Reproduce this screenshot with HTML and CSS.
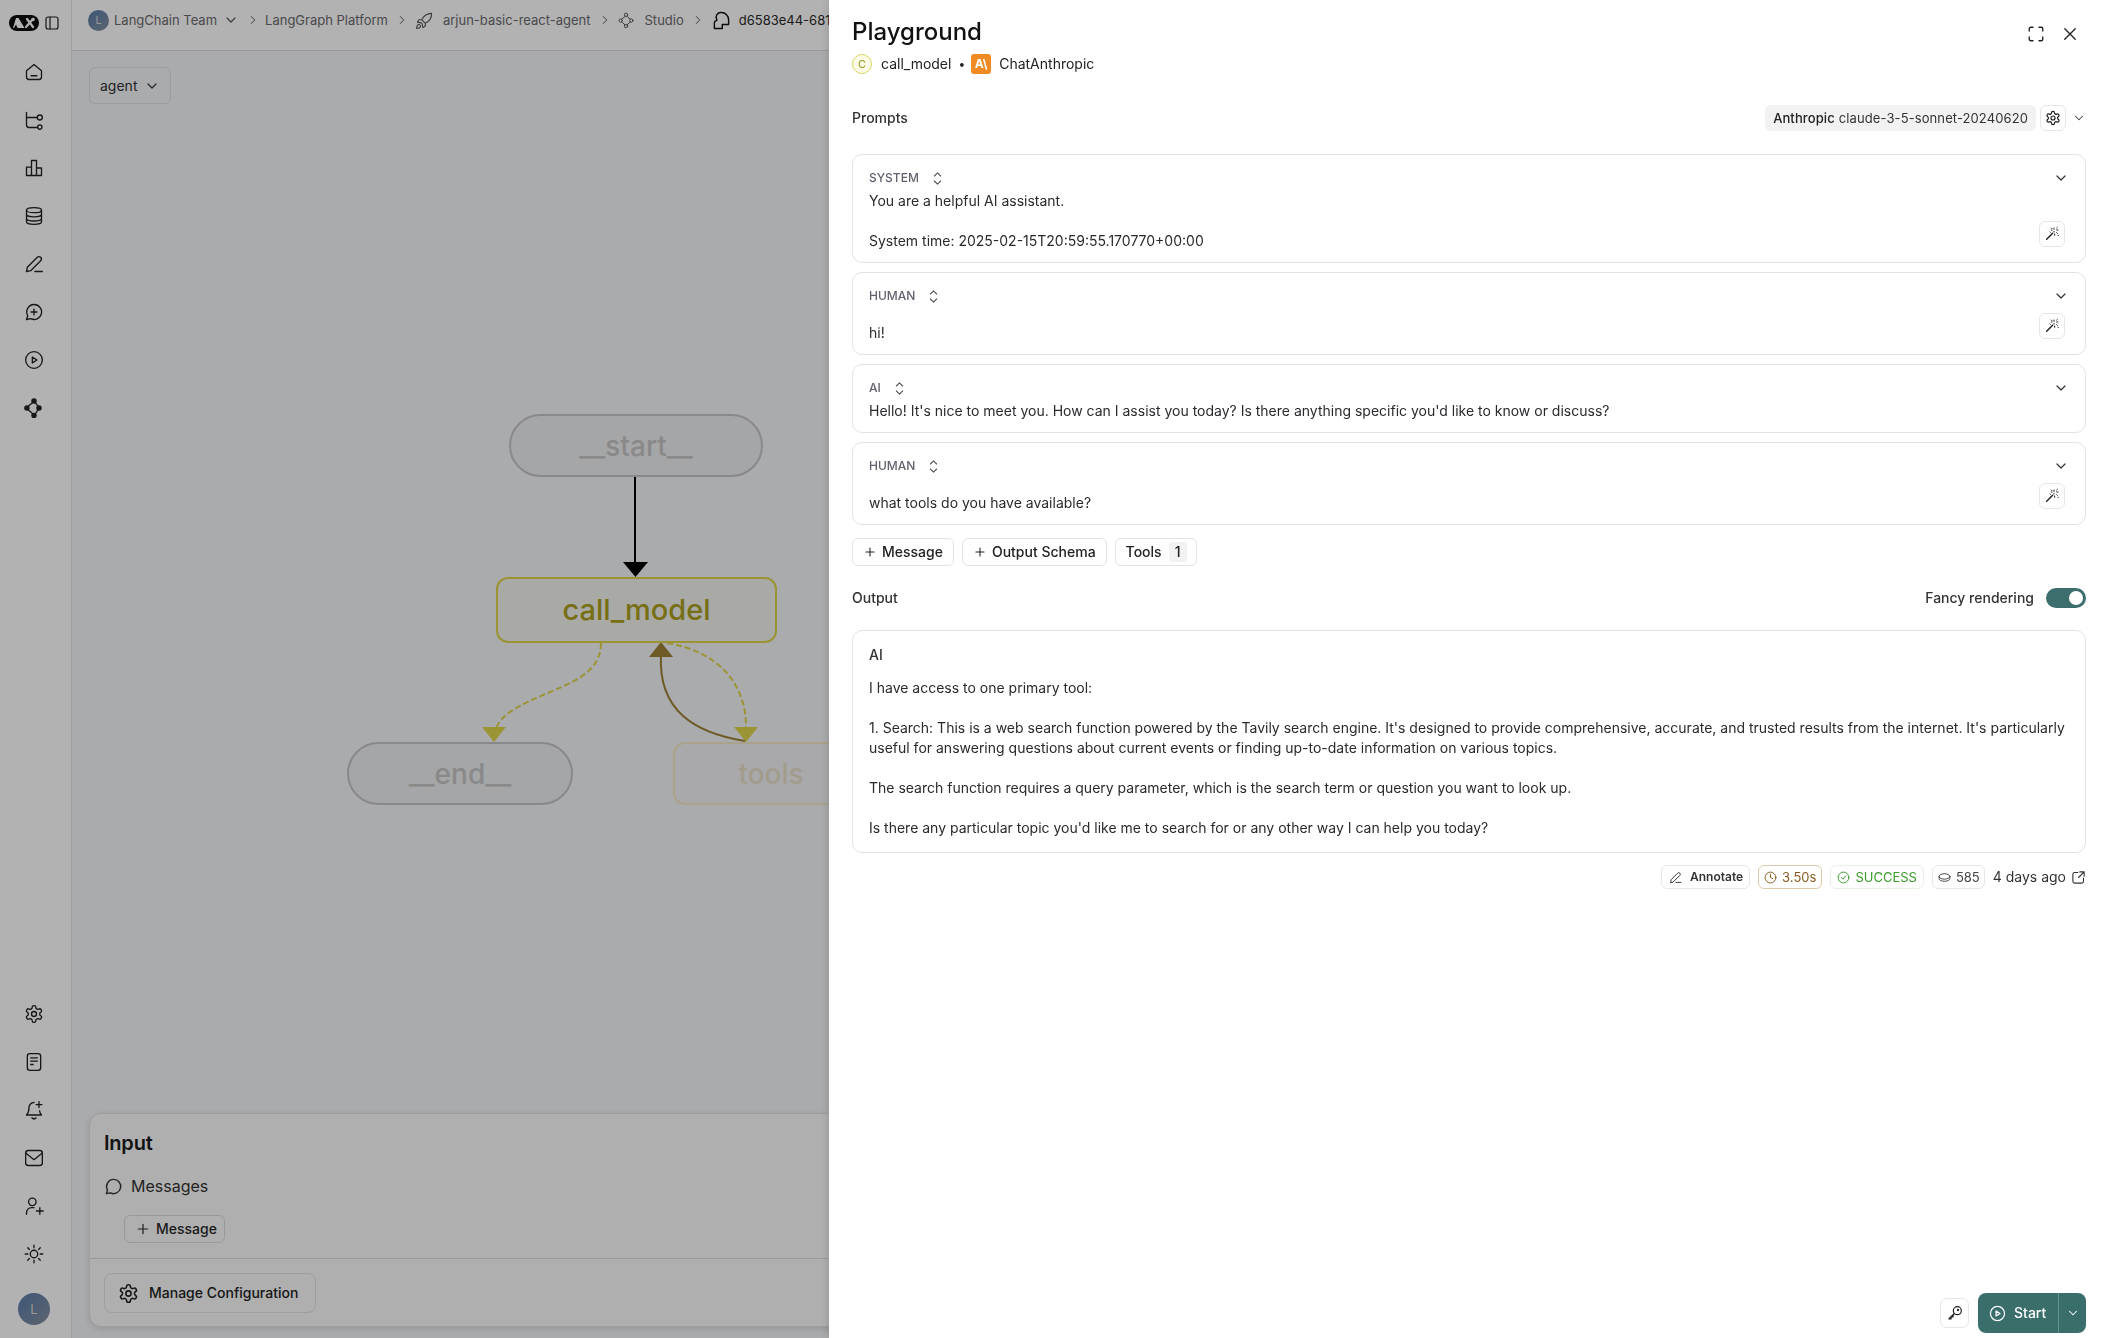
FILE: index.html
```html
<!DOCTYPE html>
<html lang="en">
<head>
  <meta charset="UTF-8">
  <meta name="viewport" content="width=device-width, initial-scale=1.0">
  <title>Playground</title>
  <link rel="stylesheet" href="styles.css">
</head>
<body>

  <!-- icon sprite -->
  <svg class="sprite" xmlns="http://www.w3.org/2000/svg">
    <symbol id="i-home" viewBox="0 0 24 24"><path d="M3 10.500 12 3l9 7.500V18a3 3 0 0 1-3 3H6a3 3 0 0 1-3-3z M8.500 16.500h7"/></symbol>
    <symbol id="i-tree" viewBox="0 0 24 24"><path d="M3 3v15a3 3 0 0 0 3 3h10 M3 9h13"/><circle cx="19" cy="9" r="3"/><circle cx="19" cy="20.500" r="2.600"/></symbol>
    <symbol id="i-chart" viewBox="0 0 24 24"><path d="M3 21V11h6 M9 21V3h6v18 M15 12h6v9 M3 21h18"/></symbol>
    <symbol id="i-db" viewBox="0 0 24 24"><ellipse cx="12" cy="5" rx="9" ry="3"/><path d="M3 5v14c0 1.700 4 3 9 3s9-1.300 9-3V5 M3 10c0 1.700 4 3 9 3s9-1.300 9-3 M3 15c0 1.700 4 3 9 3s9-1.300 9-3"/></symbol>
    <symbol id="i-pen" viewBox="0 0 24 24"><path d="M3 21l1-5L16 4a2.800 2.800 0 0 1 4 4L8 20z M13 21h9"/></symbol>
    <symbol id="i-chat-plus" viewBox="0 0 24 24"><path d="M12 3a9 9 0 1 1-4 17l-5 1 1.500-4.500A9 9 0 0 1 12 3z M12 8.500v7 M8.500 12h7"/></symbol>
    <symbol id="i-play" viewBox="0 0 24 24"><circle cx="12" cy="12" r="10"/><path d="M10 8.500v7l5.500-3.500z"/></symbol>
    <symbol id="i-flow" viewBox="0 0 24 24"><circle class="fill" cx="12" cy="3.500" r="2.500"/><circle class="fill" cx="3.500" cy="12" r="2.500"/><circle class="fill" cx="18" cy="12" r="2.500"/><circle class="fill" cx="12" cy="21" r="2.500"/><path d="M10.500 5.500 5 10 M13.500 5.500 17 10 M5 14l5.500 5 M17 14l-3.500 5"/></symbol>
    <symbol id="i-gear" viewBox="0 0 24 24"><path d="M12.220 2h-.44a2 2 0 0 0-2 2v.18a2 2 0 0 1-1 1.730l-.43.25a2 2 0 0 1-2 0l-.15-.08a2 2 0 0 0-2.730.73l-.22.38a2 2 0 0 0 .73 2.730l.15.1a2 2 0 0 1 1 1.720v.51a2 2 0 0 1-1 1.740l-.15.09a2 2 0 0 0-.73 2.730l.22.38a2 2 0 0 0 2.730.73l.15-.08a2 2 0 0 1 2 0l.43.25a2 2 0 0 1 1 1.730V20a2 2 0 0 0 2 2h.44a2 2 0 0 0 2-2v-.18a2 2 0 0 1 1-1.730l.43-.25a2 2 0 0 1 2 0l.15.08a2 2 0 0 0 2.730-.73l.22-.39a2 2 0 0 0-.73-2.730l-.15-.08a2 2 0 0 1-1-1.740v-.5a2 2 0 0 1 1-1.740l.15-.09a2 2 0 0 0 .73-2.730l-.22-.38a2 2 0 0 0-2.730-.73l-.15.08a2 2 0 0 1-2 0l-.43-.25a2 2 0 0 1-1-1.730V4a2 2 0 0 0-2-2z"/><circle cx="12" cy="12" r="3"/></symbol>
    <symbol id="i-doc" viewBox="0 0 24 24"><rect x="4" y="2" width="16" height="20" rx="3"/><path d="M8 7h8 M8 11h8 M8 15h3"/></symbol>
    <symbol id="i-bell" viewBox="0 0 24 24"><path d="M12 3a6 6 0 0 0-6 6c0 5-2 8-3 9h18c-.8-.8-1.800-2.500-2.400-5 M9.500 21.500 12 23l2.500-1.500 M18 2v7 M14.500 5.500h7"/></symbol>
    <symbol id="i-mail" viewBox="0 0 24 24"><rect x="2" y="3" width="20" height="18" rx="3"/><path d="M2 6l10 8 10-8"/></symbol>
    <symbol id="i-user-plus" viewBox="0 0 24 24"><circle cx="10" cy="7" r="4.500"/><path d="M3 22v-2a6 6 0 0 1 6-6h3 M19 14v8 M15 18h8"/></symbol>
    <symbol id="i-sun" viewBox="0 0 24 24"><circle cx="12" cy="12" r="4.500"/><path d="M12 1.500v3 M12 19.500v3 M1.500 12h3 M19.500 12h3 M4.500 4.500l2 2 M17.500 17.500l2 2 M4.500 19.500l2-2 M17.500 6.500l2-2"/></symbol>
    <symbol id="i-chev" viewBox="0 0 24 24"><path d="M6 9l6 6 6-6"/></symbol>
    <symbol id="i-right" viewBox="0 0 24 24"><path d="M9 6l6 6-6 6"/></symbol>
    <symbol id="i-sort" viewBox="0 0 24 24"><path d="M7 8l5-5 5 5 M7 16l5 5 5-5"/></symbol>
    <symbol id="i-rocket" viewBox="0 0 24 24"><path d="M21 3c-6 0-10 3-12.500 8L13 15.500c5-2.500 8-6.500 8-12.500z M8.500 11H5l-2 3 5 1 M13 15.500V19l-3 2-1-5 M4 17c-1.500 1-2 4-2 5 1 0 4-.5 5-2 .5-1-.5-2-1-2.500-.5-.5-1.200-1-2-.5z"/></symbol>
    <symbol id="i-graph" viewBox="0 0 24 24"><circle cx="12" cy="3.500" r="2.500"/><circle cx="4" cy="12" r="2.500"/><circle cx="20" cy="12" r="2.500"/><circle cx="12" cy="20.500" r="2.500"/><path d="M10.500 6 5.500 10 M13.500 6l5 4 M5.500 14l5 4.500 M18.500 14l-5 4.500"/></symbol>
    <symbol id="i-thread" viewBox="0 0 24 24"><path d="M12 2a9 9 0 0 1 9 9v6h-8v5H3v-7c0-2 2-3 3-3V11a6 6 0 0 1 6-9z"/></symbol>
    <symbol id="i-bubble" viewBox="0 0 24 24"><path d="M12 3a9 9 0 1 1-4 17l-5 1 1.500-4.500A9 9 0 0 1 12 3z"/></symbol>
    <symbol id="i-plus" viewBox="0 0 24 24"><path d="M12 5v14 M5 12h14"/></symbol>
    <symbol id="i-wand" viewBox="0 0 24 24"><path class="wand-handle" d="M4 20 13 11"/><path d="M15 3v2 M15 8v1 M11 6h1 M19 6h2 M19 10l1 1 M11 3l1 1 M20 2l-1 1 M16 12v2 M21 14h.5 M9 9l.5.5"/></symbol>
    <symbol id="i-expand" viewBox="0 0 24 24"><path d="M3 8V5a2 2 0 0 1 2-2h3 M16 3h3a2 2 0 0 1 2 2v3 M21 16v3a2 2 0 0 1-2 2h-3 M8 21H5a2 2 0 0 1-2-2v-3"/></symbol>
    <symbol id="i-close" viewBox="0 0 24 24"><path d="M5 5l14 14 M19 5 5 19"/></symbol>
    <symbol id="i-clock" viewBox="0 0 24 24"><circle cx="12" cy="12" r="10"/><path d="M12 6v6l4 2"/></symbol>
    <symbol id="i-check" viewBox="0 0 24 24"><circle cx="12" cy="12" r="10"/><path d="M8 12l3 3 5-6"/></symbol>
    <symbol id="i-coin" viewBox="0 0 24 24"><ellipse cx="12" cy="10" rx="10" ry="5"/><path d="M2 10v4c0 2.800 4.500 5 10 5s10-2.200 10-5v-4"/></symbol>
    <symbol id="i-external" viewBox="0 0 24 24"><path d="M11 4H6a3 3 0 0 0-3 3v11a3 3 0 0 0 3 3h11a3 3 0 0 0 3-3v-5 M14 3h7v7 M21 3l-9 9"/></symbol>
    <symbol id="i-key" viewBox="0 0 24 24"><circle cx="15.500" cy="8.500" r="6"/><circle cx="16.500" cy="7.500" r=".8"/><path d="M11 12.500 3 20.500v.5h3v-3h3v-3h1"/></symbol>
  </svg>

  <div class="app">
    <nav class="sidebar">
      <div class="logo-row">
        <div class="logo">
          <svg viewBox="0 0 30 16"><path class="logo-fill" d="M7 3h2.500l6 10H8.500L7 9.500 5 13H4z"/><path class="logo-mark" d="M18 4l6 8 M24 4l-7 8"/><circle class="logo-fill" cx="24" cy="4.500" r="1.800"/></svg>
        </div>
        <svg class="icon toggle-icon" viewBox="0 0 24 24"><rect x="3" y="3" width="18" height="18" rx="3"/><path d="M9 3v18"/></svg>
      </div>
      <div class="nav-group">
        <svg class="icon nav-icon"><use href="#i-home"/></svg>
        <svg class="icon nav-icon"><use href="#i-tree"/></svg>
        <svg class="icon nav-icon"><use href="#i-chart"/></svg>
        <svg class="icon nav-icon"><use href="#i-db"/></svg>
        <svg class="icon nav-icon"><use href="#i-pen"/></svg>
        <svg class="icon nav-icon"><use href="#i-chat-plus"/></svg>
        <svg class="icon nav-icon"><use href="#i-play"/></svg>
        <svg class="icon nav-icon"><use href="#i-flow"/></svg>
      </div>
      <div class="nav-group nav-bottom">
        <svg class="icon nav-icon"><use href="#i-gear"/></svg>
        <svg class="icon nav-icon"><use href="#i-doc"/></svg>
        <svg class="icon nav-icon"><use href="#i-bell"/></svg>
        <svg class="icon nav-icon"><use href="#i-mail"/></svg>
        <svg class="icon nav-icon"><use href="#i-user-plus"/></svg>
        <svg class="icon nav-icon"><use href="#i-sun"/></svg>
        <div class="avatar avatar-large">L</div>
      </div>
    </nav>

    <div class="main">
      <header class="topbar">
        <div class="avatar">L</div>
        <span class="crumb">LangChain Team</span>
        <svg class="icon crumb-chev"><use href="#i-chev"/></svg>
        <svg class="icon crumb-sep"><use href="#i-right"/></svg>
        <span class="crumb">LangGraph Platform</span>
        <svg class="icon crumb-sep"><use href="#i-right"/></svg>
        <svg class="icon crumb-icon"><use href="#i-rocket"/></svg>
        <span class="crumb">arjun-basic-react-agent</span>
        <svg class="icon crumb-sep"><use href="#i-right"/></svg>
        <svg class="icon crumb-icon crumb-icon-graph"><use href="#i-graph"/></svg>
        <span class="crumb">Studio</span>
        <svg class="icon crumb-sep"><use href="#i-right"/></svg>
        <svg class="icon crumb-icon crumb-icon-dark"><use href="#i-thread"/></svg>
        <span class="crumb crumb-current">d6583e44-681</span>
      </header>

      <div class="canvas">
        <button class="agent-select">agent <svg class="icon"><use href="#i-chev"/></svg></button>

        <svg class="edges" width="830" height="900" viewBox="0 51 830 900">
          <path class="edge-black" d="M635 477V564"/>
          <path class="head-black" d="M623 562h25l-12.500 15z"/>
          <path class="edge-dash" d="M601 643c0 30-30 40-58 52-25 11-42 19-47 34"/>
          <path class="head-olive" d="M482 727h24l-12 15z"/>
          <path class="edge-dash" d="M667 643c50 8 80 40 79 86"/>
          <path class="head-olive" d="M734 727h24l-12 15z"/>
          <path class="edge-brown" d="M745 741c-50-8-87-30-84-86"/>
          <path class="head-brown" d="M649 657h24l-12-15z"/>
        </svg>

        <div class="node node-start">__start__</div>
        <div class="node node-call">call_model</div>
        <div class="node node-end">__end__</div>
        <div class="node node-tools">tools</div>

        <section class="input-panel">
          <div class="input-body">
            <h3 class="input-title">Input</h3>
            <div class="messages-row"><svg class="icon"><use href="#i-bubble"/></svg>Messages</div>
            <button class="btn btn-input-msg"><svg class="icon"><use href="#i-plus"/></svg>Message</button>
          </div>
          <div class="input-foot">
            <button class="btn btn-config"><svg class="icon"><use href="#i-gear"/></svg>Manage Configuration</button>
          </div>
        </section>
      </div>
    </div>
  </div>

  <div class="overlay"></div>

  <aside class="panel">
    <div class="panel-head">
      <div>
        <h1 class="panel-title">Playground</h1>
        <div class="panel-sub">
          <span class="node-badge">C</span>
          <span class="sub-node">call_model</span>
          <span class="sub-dot">•</span>
          <span class="anthropic-badge">A\</span>
          <span>ChatAnthropic</span>
        </div>
      </div>
      <div class="panel-actions">
        <svg class="icon"><use href="#i-expand"/></svg>
        <svg class="icon icon-close"><use href="#i-close"/></svg>
      </div>
    </div>

    <div class="section-row prompts-row">
      <span class="section-label">Prompts</span>
      <div class="model-tools">
        <span class="model-pill"><b>Anthropic</b> claude-3-5-sonnet-20240620</span>
        <button class="square-btn"><svg class="icon"><use href="#i-gear"/></svg></button>
        <svg class="icon model-chev"><use href="#i-chev"/></svg>
      </div>
    </div>

    <div class="message-list">
      <div class="message-card">
        <div class="card-head"><span class="role">SYSTEM</span><svg class="icon sort-icon"><use href="#i-sort"/></svg><svg class="icon card-chev"><use href="#i-chev"/></svg></div>
        <div class="card-body">
          <div class="card-text">You are a helpful AI assistant.<br><br>System time: 2025-02-15T20:59:55.170770+00:00</div>
          <button class="square-btn wand-btn"><svg class="icon"><use href="#i-wand"/></svg></button>
        </div>
      </div>
      <div class="message-card">
        <div class="card-head card-head-tall"><span class="role">HUMAN</span><svg class="icon sort-icon"><use href="#i-sort"/></svg><svg class="icon card-chev"><use href="#i-chev"/></svg></div>
        <div class="card-body">
          <div class="card-text">hi!</div>
          <button class="square-btn wand-btn"><svg class="icon"><use href="#i-wand"/></svg></button>
        </div>
      </div>
      <div class="message-card">
        <div class="card-head"><span class="role">AI</span><svg class="icon sort-icon"><use href="#i-sort"/></svg><svg class="icon card-chev"><use href="#i-chev"/></svg></div>
        <div class="card-body">
          <div class="card-text">Hello! It's nice to meet you. How can I assist you today? Is there anything specific you'd like to know or discuss?</div>
        </div>
      </div>
      <div class="message-card">
        <div class="card-head card-head-tall"><span class="role">HUMAN</span><svg class="icon sort-icon"><use href="#i-sort"/></svg><svg class="icon card-chev"><use href="#i-chev"/></svg></div>
        <div class="card-body">
          <div class="card-text">what tools do you have available?</div>
          <button class="square-btn wand-btn"><svg class="icon"><use href="#i-wand"/></svg></button>
        </div>
      </div>
    </div>

    <div class="add-row">
      <button class="btn btn-add"><svg class="icon"><use href="#i-plus"/></svg>Message</button>
      <button class="btn btn-add"><svg class="icon"><use href="#i-plus"/></svg>Output Schema</button>
      <button class="btn btn-add btn-tools">Tools <span class="count">1</span></button>
    </div>

    <div class="section-row output-row">
      <span class="section-label">Output</span>
      <div class="fancy">Fancy rendering <span class="switch"></span></div>
    </div>

    <div class="output-card">
      <div class="output-role">AI</div>
      <p>I have access to one primary tool:</p>
      <p>1. Search: This is a web search function powered by the Tavily search engine. It's designed to provide comprehensive, accurate, and trusted results from the internet. It's particularly useful for answering questions about current events or finding up-to-date information on various topics.</p>
      <p>The search function requires a query parameter, which is the search term or question you want to look up.</p>
      <p>Is there any particular topic you'd like me to search for or any other way I can help you today?</p>
    </div>

    <div class="meta-row">
      <span class="tag tag-annotate"><svg class="icon"><use href="#i-pen"/></svg>Annotate</span>
      <span class="tag tag-time"><svg class="icon"><use href="#i-clock"/></svg>3.50s</span>
      <span class="tag tag-success"><svg class="icon"><use href="#i-check"/></svg>SUCCESS</span>
      <span class="tag tag-tokens"><svg class="icon"><use href="#i-coin"/></svg>585</span>
      <span class="time-ago">4 days ago <svg class="icon"><use href="#i-external"/></svg></span>
    </div>

    <div class="panel-foot">
      <button class="square-btn key-btn"><svg class="icon"><use href="#i-key"/></svg></button>
      <div class="start-btn">
        <span class="start-main"><svg class="icon"><use href="#i-play"/></svg>Start</span>
        <span class="start-more"><svg class="icon"><use href="#i-chev"/></svg></span>
      </div>
    </div>
  </aside>

</body>
</html>
```

FILE: styles.css
```css
* {
  box-sizing: border-box;
}

html, body {
  height: 100%;
}

body {
  margin: 0;
  overflow: hidden;
  font-family: Inter, 'Noto Sans', sans-serif;
  font-size: 14px;
  line-height: 20px;
  color: #1f1f23;
  background-color: #fff;
}

button {
  font: inherit;
  color: inherit;
  background: none;
  padding: 0;
}

.sprite {
  display: none;
}

.icon {
  width: 16px;
  height: 16px;
  flex: none;
  fill: none;
  stroke: currentColor;
  stroke-width: 1.8;
  stroke-linecap: round;
  stroke-linejoin: round;
}

.fill {
  fill: currentColor;
}

.app {
  display: flex;
  height: 100%;
}

/* Left rail */
.sidebar {
  width: 72px;
  flex: none;
  display: flex;
  flex-direction: column;
  align-items: center;
  background-color: #fff;
  border-right: 1px solid #e3e3e5;
  color: #222;
  padding: 0 3px 13px 0;
}

.logo-row {
  height: 51px;
  width: 100%;
  display: flex;
  align-items: center;
  padding: 0 0 5px 9px;
  gap: 5px;
}

.logo {
  width: 30px;
  height: 16px;
  border-radius: 8px;
  background-color: #0c0c0c;
  display: flex;
}

.logo-fill {
  fill: #fff;
}

.logo-mark {
  fill: none;
  stroke: #fff;
  stroke-width: 2.2;
  stroke-linecap: round;
}

.toggle-icon {
  width: 16px;
  height: 16px;
}

.nav-group {
  display: flex;
  flex-direction: column;
  align-items: center;
  gap: 28px;
  margin-top: 11px;
}

.nav-icon {
  width: 20px;
  height: 20px;
  stroke-width: 1.6;
}

.nav-bottom {
  margin-top: auto;
}

.avatar {
  width: 21px;
  height: 21px;
  flex: none;
  border-radius: 50%;
  display: flex;
  align-items: center;
  justify-content: center;
  font-size: 11px;
  color: #d8d8d8;
  background: linear-gradient(135deg, #5a7dab, #8490a0);
}

.avatar-large {
  width: 32px;
  height: 32px;
  font-size: 13px;
  margin-top: 1px;
}

.main {
  flex: 1;
  min-width: 0;
  display: flex;
  flex-direction: column;
}

/* Breadcrumbs */
.topbar {
  height: 51px;
  flex: none;
  display: flex;
  align-items: center;
  padding: 0 0 10px 16px;
  font-size: 13px;
  white-space: nowrap;
  overflow: hidden;
  border-bottom: 1px solid #dcdcde;
  background-color: #fff;
}

.crumb {
  color: #6b6b6e;
  margin-left: 5px;
}

.crumb-current {
  color: #2a2a2a;
}

.crumb-chev {
  margin-left: 6px;
  color: #555;
}

.crumb-sep {
  width: 14px;
  height: 14px;
  margin-left: 7px;
  color: #777;
}

.crumb-icon {
  width: 19px;
  height: 19px;
  margin: 0 4px 0 6px;
  color: #555;
  stroke-width: 1.4;
}

.crumb-icon-graph {
  width: 16px;
  margin: 0 6px 0 6px;
}

.crumb-icon-dark {
  margin: 0 3px 0 7px;
  color: #111;
  stroke-width: 1.8;
}

/* Graph canvas */
.canvas {
  flex: 1;
  position: relative;
  background-color: #f4f5f8;
}

.agent-select {
  position: absolute;
  left: 17px;
  top: 16px;
  width: 82px;
  height: 37px;
  display: flex;
  align-items: center;
  gap: 7px;
  padding-left: 10px;
  border: 1px solid #dedee2;
  border-radius: 6px;
  color: #333;
  background-color: #f4f5f8;
}

.edges {
  position: absolute;
  left: -72px;
  top: 0;
  fill: none;
}

.edge-black {
  stroke: #000;
  stroke-width: 2;
}

.head-black {
  fill: #000;
}

.edge-dash {
  stroke: #ddd54c;
  stroke-width: 2;
  stroke-dasharray: 6 3;
}

.head-olive {
  fill: #ddd54c;
}

.edge-brown {
  stroke: #9d8136;
  stroke-width: 2;
}

.head-brown {
  fill: #9d8136;
}

.node {
  position: absolute;
  display: flex;
  align-items: center;
  justify-content: center;
  font-size: 28px;
  font-weight: 500;
  height: 63px;
  background-color: #edeef0;
  border: 2px solid #c5c5c8;
  color: #c4c4c5;
  border-radius: 32px;
}

.node-start {
  left: 437px;
  top: 363px;
  width: 254px;
}

.node-end {
  left: 275px;
  top: 691px;
  width: 226px;
}

.node-call {
  left: 424px;
  top: 526px;
  width: 281px;
  height: 66px;
  border-radius: 12px;
  font-size: 29px;
  background-color: #f2f2ec;
  border-color: #ddd54c;
  color: #aaa01e;
}

.node-tools {
  left: 601px;
  top: 691px;
  width: 196px;
  border-radius: 12px;
  background-color: #f2f3f5;
  border-color: #f5e8c8;
  color: #e8e0cb;
}

/* Input box at the bottom of the canvas */
.input-panel {
  position: absolute;
  left: 17px;
  bottom: 11px;
  width: 1100px;
  height: 214px;
  display: flex;
  flex-direction: column;
  background-color: #fbfbfb;
  border: 1px solid #e3e3e5;
  border-radius: 12px;
  box-shadow: 0 2px 6px rgba(0, 0, 0, 0.12);
}

.input-body {
  flex: 1;
  padding: 15px 14px 0;
}

.input-title {
  margin: 0;
  font-size: 20px;
  line-height: 28px;
  font-weight: 600;
  letter-spacing: -0.2px;
  color: #1a1a1a;
}

.messages-row {
  display: flex;
  align-items: center;
  gap: 8px;
  margin-top: 17px;
  font-size: 16px;
  line-height: 24px;
  color: #333;
}

.messages-row .icon {
  width: 19px;
  height: 19px;
}

.btn {
  display: inline-flex;
  align-items: center;
  height: 28px;
  gap: 5px;
  border: 1px solid #e3e3e5;
  border-radius: 6px;
  font-size: 14px;
  white-space: nowrap;
}

.btn-input-msg {
  width: 101px;
  margin: 17px 0 0 20px;
  padding-left: 10px;
  font-size: 14px;
  font-weight: 500;
  color: #2a2a2a;
  border-color: #dcdcde;
}

.input-foot {
  height: 68px;
  flex: none;
  padding: 14px 14px 0;
  border-top: 1px solid #dcdcde;
}

.btn-config {
  width: 212px;
  height: 40px;
  padding-left: 13px;
  gap: 10px;
  border-radius: 8px;
  font-weight: 500;
  color: #222;
}

.btn-config .icon {
  width: 21px;
  height: 21px;
}

/* Dim layer under the drawer */
.overlay {
  position: fixed;
  inset: 0;
  background-color: rgba(0, 0, 0, 0.3);
}

/* Playground drawer */
.panel {
  position: fixed;
  top: 0;
  right: 0;
  bottom: 0;
  width: 1279px;
  display: flex;
  flex-direction: column;
  padding: 16px 22px 5px 23px;
  background-color: #fff;
  box-shadow: -2px 0 8px rgba(0, 0, 0, 0.12);
}

.panel-head {
  display: flex;
  justify-content: space-between;
  align-items: flex-start;
}

.panel-title {
  margin: 0;
  font-size: 24px;
  line-height: 32px;
  font-weight: 500;
  color: #111;
}

.panel-sub {
  display: flex;
  align-items: center;
  height: 24px;
  margin-top: 4px;
  color: #222;
}

.node-badge {
  width: 20px;
  height: 20px;
  border-radius: 50%;
  display: flex;
  align-items: center;
  justify-content: center;
  font-size: 11px;
  color: #9a9420;
  background-color: #fcfce8;
  border: 1px solid #d9d660;
}

.sub-node {
  margin-left: 9px;
}

.sub-dot {
  margin: 0 6px 0 7px;
  font-size: 12px;
}

.anthropic-badge {
  width: 20px;
  height: 20px;
  border-radius: 3px;
  margin-right: 8px;
  display: flex;
  align-items: center;
  justify-content: center;
  font-size: 12px;
  font-weight: 700;
  color: #fff;
  background-color: #f08a24;
}

.panel-actions {
  display: flex;
  align-items: center;
  gap: 16px;
  margin: 9px 7px 0 0;
  color: #222;
}

.panel-actions .icon {
  width: 18px;
  height: 18px;
}

.section-row {
  display: flex;
  align-items: center;
  justify-content: space-between;
}

.prompts-row {
  margin-top: 29px;
  height: 26px;
}

.section-label {
  font-weight: 500;
  color: #333;
}

.model-tools {
  display: flex;
  align-items: center;
  gap: 4px;
}

.model-pill {
  height: 26px;
  padding: 0 8px;
  display: flex;
  align-items: center;
  gap: 4px;
  border-radius: 6px;
  font-size: 13px;
  letter-spacing: 0.1px;
  color: #333;
  background-color: #f2f2f3;
  white-space: nowrap;
}

.model-pill b {
  font-weight: 500;
  color: #222;
}

.square-btn {
  width: 26px;
  height: 26px;
  display: flex;
  align-items: center;
  justify-content: center;
  border: 1px solid #e6e6e9;
  border-radius: 6px;
}

.model-chev {
  margin-left: 2px;
  width: 14px;
  height: 14px;
  color: #444;
}

.message-list {
  display: flex;
  flex-direction: column;
  gap: 9px;
  margin-top: 23px;
}

.message-card {
  border: 1px solid #e3e3e6;
  border-radius: 10px;
  padding: 13px 16px 11px 16px;
}

.card-head {
  display: flex;
  align-items: center;
  height: 20px;
  margin-bottom: 3px;
}

.card-head-tall {
  margin-bottom: 7px;
}

.role {
  font-size: 12px;
  font-weight: 500;
  color: #62626e;
}

.sort-icon {
  margin-left: 11px;
  width: 15px;
  height: 15px;
  color: #555;
}

.card-chev {
  margin-left: auto;
  margin-right: 0;
  width: 16px;
  height: 16px;
  color: #333;
}

.card-body {
  display: flex;
  align-items: flex-end;
  justify-content: space-between;
}

.card-text {
  color: #2a2a2e;
}

.wand-btn {
  margin: 0 4px 4px 0;
}

.wand-btn .icon {
  stroke-width: 1.5;
  color: #222;
}

.wand-handle {
  stroke-width: 2.2;
}

.add-row {
  display: flex;
  gap: 8px;
  margin-top: 13px;
}

.btn-add {
  padding: 0 10px;
  font-weight: 500;
  color: #222;
}

.btn-add .icon {
  width: 14px;
  height: 14px;
}

.btn-tools {
  gap: 7px;
  padding-right: 9px;
}

.count {
  width: 18px;
  height: 20px;
  border-radius: 3px;
  text-align: center;
  background-color: #f2f2f3;
}

.output-row {
  height: 20px;
  margin-top: 22px;
}

.fancy {
  display: flex;
  align-items: center;
  gap: 12px;
  font-weight: 500;
  color: #333;
}

.switch {
  position: relative;
  width: 40px;
  height: 20px;
  border-radius: 10px;
  background-color: #3b6e6c;
}

.switch::after {
  content: "";
  position: absolute;
  right: 3px;
  top: 3px;
  width: 14px;
  height: 14px;
  border-radius: 50%;
  background-color: #fff;
}

.output-card {
  margin-top: 22px;
  height: 223px;
  border: 1px solid #e3e3e6;
  border-radius: 10px;
  padding: 14px 16px;
  color: #2a2a2e;
}

.output-role {
  font-weight: 500;
  color: #333;
}

.output-card p {
  margin: 0 0 20px;
}

.output-role + p {
  margin-top: 13px;
}

.meta-row {
  display: flex;
  justify-content: flex-end;
  align-items: center;
  gap: 8px;
  margin-top: 12px;
  font-size: 13px;
}

.tag {
  height: 24px;
  display: flex;
  align-items: center;
  gap: 5px;
  padding: 0 5px;
  border: 1px solid #e6e6e9;
  border-radius: 6px;
}

.tag .icon {
  width: 13px;
  height: 13px;
}

.tag-annotate {
  padding: 0 6px 0 7px;
  gap: 8px;
  font-size: 12px;
  font-weight: 600;
  color: #333;
}

.tag-time {
  color: #8a5a20;
  border-color: #e3c9ac;
}

.tag-success {
  padding: 0 6px;
  color: #3a9a2a;
  border-color: #e6f2e4;
}

.tag-tokens {
  padding: 0 4px 0 5px;
  color: #444;
}

.time-ago {
  display: flex;
  align-items: center;
  gap: 5px;
  font-size: 14px;
  color: #333;
}

.time-ago .icon {
  width: 15px;
  height: 15px;
}

.panel-foot {
  margin-top: auto;
  display: flex;
  justify-content: flex-end;
  align-items: center;
  gap: 9px;
}

.key-btn {
  width: 29px;
  height: 30px;
  border-radius: 7px;
}

.start-btn {
  width: 108px;
  height: 40px;
  display: flex;
  border-radius: 8px;
  color: #fff;
  font-weight: 500;
  background-color: #396e6b;
}

.start-main {
  flex: 1;
  display: flex;
  align-items: center;
  gap: 8px;
  padding-left: 11px;
  border-right: 1px solid #5f948f;
}

.start-main .icon {
  width: 17px;
  height: 17px;
}

.start-more {
  width: 27px;
  display: flex;
  align-items: center;
  justify-content: center;
}

.start-more .icon {
  width: 14px;
  height: 14px;
}
```
